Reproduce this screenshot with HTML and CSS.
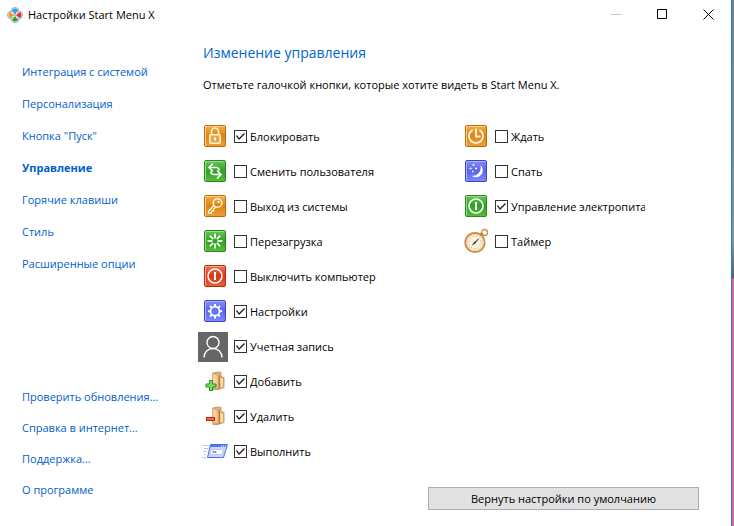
FILE: index.html
```html
<!DOCTYPE html>
<html lang="ru">
<head>
<meta charset="utf-8">
<meta name="viewport" content="width=device-width, initial-scale=1">
<title>Настройки Start Menu X</title>
<link rel="stylesheet" href="styles.css">
</head>
<body>
<svg class="defs" aria-hidden="true">
  <defs>
    <linearGradient id="orange" x1="0" y1="0" x2="0" y2="1"><stop offset="0" stop-color="#eeb04a"/><stop offset=".5" stop-color="#de850f"/><stop offset="1" stop-color="#eda03a"/></linearGradient>
    <linearGradient id="green" x1="0" y1="0" x2="0" y2="1"><stop offset="0" stop-color="#6cc65c"/><stop offset=".5" stop-color="#2fa021"/><stop offset="1" stop-color="#58bc3c"/></linearGradient>
    <linearGradient id="red" x1="0" y1="0" x2="0" y2="1"><stop offset="0" stop-color="#f07a55"/><stop offset=".5" stop-color="#dc3510"/><stop offset="1" stop-color="#ee6038"/></linearGradient>
    <linearGradient id="blue" x1="0" y1="0" x2="0" y2="1"><stop offset="0" stop-color="#8590f5"/><stop offset=".5" stop-color="#5a66e6"/><stop offset="1" stop-color="#7d8cff"/></linearGradient>
    <linearGradient id="wood" x1="0" y1="0" x2="1" y2="0"><stop offset="0" stop-color="#fbe0b4"/><stop offset="1" stop-color="#e8bb7c"/></linearGradient>
    <symbol id="folder" viewBox="0 0 30 30">
      <path d="M15 6l5-1 3 .5v4l3 1v10l-6 2h-5z" fill="#e3b377" stroke="#c08a4c" stroke-width=".8"/>
      <path d="M22.500 11l2.500.8v8l-2.500.7z" fill="#f8dcae"/>
      <path d="M14.700 6.200l6 2.300v13.700l-6-2.200z" fill="url(#wood)" stroke="#cf9a58" stroke-width=".8"/>
      <path d="M21.300 8.500v13.500" stroke="#a96f30"/>
    </symbol>
  </defs>
</svg>
<div class="window">
  <header class="titlebar">
    <svg class="app-icon" viewBox="0 0 16 16" aria-hidden="true">
      <g fill="#dfe4f0" stroke="#a0a9c2" stroke-width=".9"><circle cx="8" cy="4.200" r="3.800"/><circle cx="4.200" cy="8" r="3.800"/><circle cx="11.800" cy="8" r="3.800"/><circle cx="8" cy="11.800" r="3.800"/></g>
      <path d="M5 3Q8 .2 11 3L8 6.800z" fill="#2f9ff0"/>
      <path d="M3 5Q.2 8 3 11L6.800 8z" fill="#f59a16"/>
      <path d="M13 5Q15.800 8 13 11L9.200 8z" fill="#f02c20"/>
      <path d="M5 13Q8 15.800 11 13L8 9.200z" fill="#18ad18"/>
    </svg>
    <span class="title">Настройки Start Menu X</span>
    <div class="controls">
      <button type="button" aria-label="Свернуть" disabled><svg viewBox="0 0 11 11"><path d="M0 5.500h11" stroke="#c8c8c8"/></svg></button>
      <button type="button" aria-label="Развернуть"><svg viewBox="0 0 11 11"><path d="M.5 .5h9v9h-9z" fill="none" stroke="#000"/></svg></button>
      <button type="button" aria-label="Закрыть"><svg viewBox="0 0 11 11"><path d="M.5 .5l10 10M10.500 .5l-10 10" stroke="#000"/></svg></button>
    </div>
  </header>
  <div class="content">
    <nav class="sidebar">
      <ul class="sections">
        <li><a href="#integration">Интеграция с системой</a></li>
        <li><a href="#personal">Персонализация</a></li>
        <li><a href="#start">Кнопка "Пуск"</a></li>
        <li><a href="#control" class="current" aria-current="page">Управление</a></li>
        <li><a href="#hotkeys">Горячие клавиши</a></li>
        <li><a href="#style">Стиль</a></li>
        <li><a href="#advanced">Расширенные опции</a></li>
      </ul>
      <ul class="help">
        <li><a href="#updates">Проверить обновления...</a></li>
        <li><a href="#help">Справка в интернет...</a></li>
        <li><a href="#support">Поддержка...</a></li>
        <li><a href="#about">О программе</a></li>
      </ul>
    </nav>
    <main class="main">
      <h1>Изменение управления</h1>
      <p class="hint">Отметьте галочкой кнопки, которые хотите видеть в Start Menu X.</p>
      <div class="options">
        <div class="column">
          <label class="option">
            <svg viewBox="0 0 30 30"><rect x="6.500" y="3.500" width="21" height="21" rx="1.500" fill="url(#orange)" stroke="#c96a0a"/><path d="M7.500 23.500v-19h19" fill="none" stroke="#f7cf8a"/><path d="M13.500 13v-3.500a3.500 3.500 0 0 1 7 0V13" fill="none" stroke="#fff3dc" stroke-width="1.600"/><rect x="11.800" y="12.800" width="10.400" height="8.400" rx="1" fill="#eda63e" stroke="#fff3dc" stroke-width="1.600"/><path d="M17 15.500v3" stroke="#fff" stroke-width="1.800"/></svg>
            <input type="checkbox" checked><span>Блокировать</span>
          </label>
          <label class="option">
            <svg viewBox="0 0 30 30"><rect x="6.500" y="3.500" width="21" height="21" rx="1.500" fill="url(#green)" stroke="#268a1c"/><path d="M7.500 23.500v-19h19" fill="none" stroke="#98db8a"/><path d="M21.500 13.500q-1-3-3-3H11M15 6.500l-4 4 4 4M12.500 14.500q1 3 3 3H23M19 13.500l4 4-4 4" fill="none" stroke="#fff" stroke-width="1.700"/></svg>
            <input type="checkbox"><span>Сменить пользователя</span>
          </label>
          <label class="option">
            <svg viewBox="0 0 30 30"><rect x="6.500" y="3.500" width="21" height="21" rx="1.500" fill="url(#orange)" stroke="#c96a0a"/><path d="M7.500 23.500v-19h19" fill="none" stroke="#f7cf8a"/><circle cx="19.500" cy="11" r="4.300" fill="none" stroke="#fff3dc" stroke-width="1.500"/><circle cx="20.500" cy="10" r="1.200" fill="#fff3dc"/><path d="M16 13.500l-5.500 5.500v2h3v-2h2v-2l2.500-2" fill="none" stroke="#fff3dc" stroke-width="1.300"/></svg>
            <input type="checkbox"><span>Выход из системы</span>
          </label>
          <label class="option">
            <svg viewBox="0 0 30 30"><rect x="6.500" y="3.500" width="21" height="21" rx="1.500" fill="url(#green)" stroke="#268a1c"/><path d="M7.500 23.500v-19h19" fill="none" stroke="#98db8a"/><path d="M17 6.500v5M17 16.500v5M9.500 14h5M19.500 14h5M11.700 8.700l3.500 3.500M18.800 15.800l3.500 3.500M22.300 8.700l-3.500 3.500M15.200 15.800l-3.500 3.500" stroke="#f4fff0" stroke-width="1.800"/></svg>
            <input type="checkbox"><span>Перезагрузка</span>
          </label>
          <label class="option">
            <svg viewBox="0 0 30 30"><rect x="6.500" y="3.500" width="21" height="21" rx="1.500" fill="url(#red)" stroke="#c02a0c"/><path d="M7.500 23.500v-19h19" fill="none" stroke="#f8a58a"/><circle cx="17" cy="14" r="7" fill="none" stroke="#fff" stroke-width="1.600"/><path d="M17 10v8" stroke="#fff" stroke-width="2"/></svg>
            <input type="checkbox"><span>Выключить компьютер</span>
          </label>
          <label class="option">
            <svg viewBox="0 0 30 30"><rect x="6.500" y="3.500" width="21" height="21" rx="1.500" fill="url(#blue)" stroke="#3a42d0"/><path d="M7.500 23.500v-19h19" fill="none" stroke="#a9b4ff"/><path d="M17 7v3M17 18.500v3M9.800 14.200h3M21.200 14.200h3M12 9l2 2M20 17.500l2 2M22 9l-2 2M14 17.500l-2 2" stroke="#fff" stroke-width="2"/><circle cx="17" cy="14.200" r="4.500" fill="#6674f0" stroke="#fff" stroke-width="1.800"/></svg>
            <input type="checkbox" checked><span>Настройки</span>
          </label>
          <label class="option">
            <svg viewBox="0 0 30 30"><rect width="30" height="30" fill="#666"/><circle cx="15" cy="10.500" r="6" fill="none" stroke="#fff" stroke-width="1.400"/><path d="M6 25.500c0-5.500 4-9 9-9s9 3.500 9 9" fill="none" stroke="#fff" stroke-width="1.400"/></svg>
            <input type="checkbox" checked><span>Учетная запись</span>
          </label>
          <label class="option">
            <svg viewBox="0 0 30 30"><use href="#folder"/><path d="M11.500 13.500h3v3.500h3.500v3h-3.500v3.500h-3V20H8v-3h3.500z" fill="#7fdc5c" stroke="#23922a"/></svg>
            <input type="checkbox" checked><span>Добавить</span>
          </label>
          <label class="option">
            <svg viewBox="0 0 30 30"><use href="#folder"/><rect x="8.500" y="15.500" width="8" height="3" fill="#f2674c" stroke="#cf2415"/></svg>
            <input type="checkbox" checked><span>Удалить</span>
          </label>
          <label class="option">
            <svg viewBox="0 0 30 30"><path d="M12.500 7.500h17l-4 13H9.500z" fill="#c9dafc" stroke="#4a6fdc"/><path d="M12.500 8h16.500l-.7 2H11.800z" fill="#4f7ce8"/><path d="M23 9h5" stroke="#fff" stroke-dasharray="1 1"/><path d="M13.500 12.500h12l-1.500 5H12z" fill="#fff" stroke="#a9bcf0" stroke-width=".8"/><path d="M14.500 15h4" stroke="#777" stroke-width="1.500"/><path d="M4 8.500h7M6 11.500h4M5 14.500h4M6 17.500h2M4 20.500h4" stroke="#b9c9ee"/></svg>
            <input type="checkbox" checked><span>Выполнить</span>
          </label>
        </div>
        <div class="column">
          <label class="option">
            <svg viewBox="0 0 30 30"><rect x="6.500" y="3.500" width="21" height="21" rx="1.500" fill="url(#orange)" stroke="#c96a0a"/><path d="M7.500 23.500v-19h19" fill="none" stroke="#f7cf8a"/><path d="M13.500 8a7 7 0 1 0 7 0M17 6.500v8h4.500" fill="none" stroke="#fff3dc" stroke-width="1.900"/></svg>
            <input type="checkbox"><span>Ждать</span>
          </label>
          <label class="option">
            <svg viewBox="0 0 30 30"><rect x="6.500" y="3.500" width="21" height="21" rx="1.500" fill="url(#blue)" stroke="#3a42d0"/><path d="M7.500 23.500v-19h19" fill="none" stroke="#a9b4ff"/><path d="M21.500 8a7 7 0 1 1-9.500 10.500c6 1.500 11-4 9.500-10.500z" fill="#fff"/><path d="M13.500 8h2M10.500 11.500h2M16 11.500h2M13 14.500h1.500" stroke="#fff" stroke-width="1.700"/></svg>
            <input type="checkbox"><span>Спать</span>
          </label>
          <label class="option">
            <svg viewBox="0 0 30 30"><rect x="6.500" y="3.500" width="21" height="21" rx="1.500" fill="url(#green)" stroke="#268a1c"/><path d="M7.500 23.500v-19h19" fill="none" stroke="#98db8a"/><circle cx="17" cy="14" r="7" fill="none" stroke="#fff" stroke-width="1.600"/><path d="M17 10v8" stroke="#fff" stroke-width="2"/></svg>
            <input type="checkbox" checked><span>Управление электропитанием</span>
          </label>
          <label class="option">
            <svg viewBox="0 0 30 30"><circle cx="25.500" cy="5.500" r="3" fill="none" stroke="#cb8b42" stroke-width="1.300"/><path d="M21 8.500l2.500-2.500" stroke="#c08443" stroke-width="3"/><circle cx="16" cy="15.500" r="9.700" fill="#fff6e2" stroke="#c98a45" stroke-width="1.800"/><circle cx="16" cy="15.500" r="8" fill="#fdf4df" stroke="#efcb98"/><circle cx="16" cy="15.500" r="6" fill="none" stroke="#b39c7c" stroke-dasharray="1 2.140"/><path d="M13.500 18l6-6" stroke="#555" stroke-width="1.100"/><circle cx="15.800" cy="15.700" r="1" fill="#333"/></svg>
            <input type="checkbox"><span>Таймер</span>
          </label>
        </div>
      </div>
      <div class="actions"><button type="button" class="reset">Вернуть настройки по умолчанию</button></div>
    </main>
  </div>
</div>
</body>
</html>
```
FILE: styles.css
```css
* {
  box-sizing: border-box;
}

body {
  margin: 0;
  padding-right: 2px;
  min-height: 100vh;
  display: flex;
  background: linear-gradient(#6f8088 0, #7f939b 240px, #4f686c 278px, #cf6f98 279px);
  font: 11px/16px "Open Sans", "Noto Sans", sans-serif;
  color: #000;
}

.defs {
  position: absolute;
  width: 0;
  height: 0;
}

.window {
  flex: 1;
  min-width: 0;
  display: flex;
  flex-direction: column;
  background: #fff;
  border-right: 1px solid #2c7fc4;
}

.titlebar {
  display: flex;
  align-items: center;
  height: 29px;
  padding-left: 7px;
}

.app-icon {
  width: 16px;
  height: 16px;
  margin-right: 5px;
}

.controls {
  display: flex;
  margin-left: auto;
  height: 100%;
}

.controls button {
  width: 46px;
  padding: 0;
  border: 0;
  background: none;
  display: grid;
  place-items: center;
}

.controls svg {
  width: 11px;
  height: 11px;
}

.content {
  flex: 1;
  display: grid;
  grid-template-columns: 198px minmax(0, 1fr);
}

.sidebar {
  display: flex;
  flex-direction: column;
  justify-content: space-between;
  padding: 27px 0 21px 22px;
}

.sidebar ul {
  list-style: none;
  margin: 0;
  padding: 0;
}

.sidebar a {
  color: #0060cc;
  text-decoration: none;
  white-space: nowrap;
}

.sidebar .current {
  font-weight: 700;
}

.sections li {
  line-height: 32px;
}

.help li {
  line-height: 31px;
}

.main {
  display: flex;
  flex-direction: column;
  padding: 14px 32px 16px 0;
}

h1 {
  margin: 0 0 14px 5px;
  font-size: 14px;
  line-height: 20px;
  font-weight: 400;
  color: #0066cc;
}

.hint {
  margin: 0 0 29px 5px;
}

.options {
  display: grid;
  grid-template-columns: minmax(0, 182px) minmax(0, 186px);
  column-gap: 79px;
}

.column {
  display: flex;
  flex-direction: column;
  gap: 5px;
}

.option {
  display: flex;
  align-items: center;
  height: 30px;
  white-space: nowrap;
  overflow: hidden;
}

.option svg {
  flex: none;
  width: 30px;
  height: 30px;
  margin-right: 6px;
}

.option input {
  flex: none;
  appearance: none;
  width: 13px;
  height: 13px;
  margin: 0 3px 1px 0;
  border: 1px solid #333;
  background: #fff;
}

.option input:checked::before {
  content: "";
  display: block;
  width: 11px;
  height: 11px;
  background: #222;
  clip-path: polygon(1px 5px, 2px 4px, 4px 7px, 9px 2px, 10px 3px, 4px 9px);
}

.option span {
  overflow: hidden;
}

.actions {
  display: flex;
  justify-content: flex-end;
  margin-top: auto;
}

.reset {
  min-width: 271px;
  height: 23px;
  padding: 0 12px;
  border: 1px solid #adadad;
  background: #e1e1e1;
  font: inherit;
  color: #000;
}
```
